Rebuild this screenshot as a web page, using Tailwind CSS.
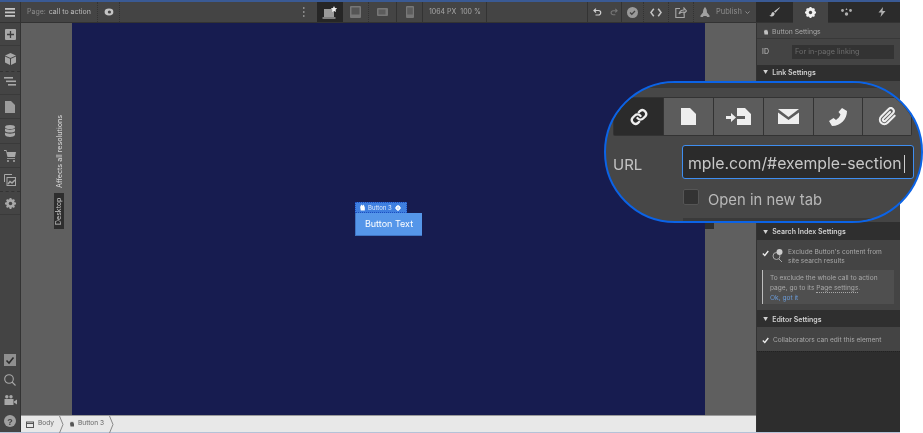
<!DOCTYPE html>
<html lang="en">
<head>
<meta charset="UTF-8">
<title>Button Settings</title>
<script src="https://cdn.jsdelivr.net/npm/@tailwindcss/browser@4"></script>
</head>
<body class="bg-white">
<div class="relative w-[923px] h-[433px] overflow-hidden font-['Inter',sans-serif] bg-white blur-[0.3px]">
  <div class="h-[2px] w-[900px] bg-[#3a5a94]"></div>
  <div class="flex flex-col w-[900px] h-[430px]">
    <!-- top bar -->
    <header class="flex h-[21px] bg-[#444444] border-b border-[#333333] text-[7px] text-[#bdbdbd]">
      <div class="w-[21px] flex items-center justify-center border-r border-[#333333]">
        <svg class="w-[10px] h-[9px]" viewBox="0 0 10 9" fill="#c4c4c4"><rect width="10" height="1.8"/><rect y="3.5" width="10" height="1.8"/><rect y="7" width="10" height="1.8"/></svg>
      </div>
      <div class="w-[77px] flex items-center pl-[6px] border-r border-dotted border-[#333333]"><span class="text-[#8c8c8c] mr-[3px]">Page:</span><span>call to action</span></div>
      <div class="w-[22px] flex items-center justify-center border-r border-dotted border-[#333333]">
        <svg class="w-[10px] h-[8px]" viewBox="0 0 10 8"><ellipse cx="5" cy="4" rx="4.4" ry="3.4" fill="#c4c4c4"/><circle cx="5.4" cy="4" r="1.6" fill="#444"/></svg>
      </div>
      <div class="flex-1 flex items-center justify-end pr-[12px]">
        <svg class="w-[3px] h-[10px]" viewBox="0 0 3 10" fill="#8a8a8a"><rect x="1" width="1.5" height="2"/><rect x="1" y="4" width="1.5" height="2"/><rect x="1" y="8" width="1.5" height="2"/></svg>
      </div>
      <div class="w-[26px] bg-[#262626] flex items-center justify-center">
        <svg class="w-[16px] h-[13px]" viewBox="0 0 16 13"><rect x="2" y="3" width="10" height="8" fill="#9a9a9a"/><path d="M0.5 11.5h13v1h-13z" fill="#d8d8d8"/><path d="M12 0l1 2 2.2.3-1.6 1.5.4 2.2-2-1-2 1 .4-2.2L8.800 2.300 11 2z" fill="#eeeeee"/></svg>
      </div>
      <div class="w-[26px] flex items-center justify-center border-r border-dotted border-[#333333]">
        <svg class="w-[11px] h-[12px]" viewBox="0 0 11 12"><rect width="11" height="12" rx="1" fill="#777"/><rect x="1.500" y="1.500" width="8" height="7" fill="#555"/></svg>
      </div>
      <div class="w-[28px] flex items-center justify-center border-r border-[#333333]">
        <svg class="w-[11px] h-[8px]" viewBox="0 0 11 8"><rect width="11" height="8" rx="1" fill="#777"/><rect x="1.500" y="1.500" width="7" height="5" fill="#5c5c5c"/></svg>
      </div>
      <div class="w-[26px] flex items-center justify-center border-r border-[#333333]">
        <svg class="w-[8px] h-[12px]" viewBox="0 0 8 12"><rect width="8" height="12" rx="1" fill="#777"/><rect x="1.200" y="1.500" width="5.600" height="7" fill="#5c5c5c"/></svg>
      </div>
      <div class="w-[64px] flex items-center pl-[6px] text-[#a8a8a8] whitespace-pre border-r border-[#333333]">1064 PX  100 %</div>
      <div class="w-[101px] border-r border-[#333333]"></div>
      <div class="w-[19px] flex items-center justify-center">
        <svg class="w-[9px] h-[8px]" viewBox="0 0 9 8" fill="none" stroke="#d0d0d0" stroke-width="1.200"><path d="M3 .6 1 2.500l2 2M1 2.500h4.500a2.200 2.200 0 0 1 0 4.500H2.500"/></svg>
      </div>
      <div class="w-[15px] flex items-center justify-center border-r border-[#333333]">
        <svg class="w-[8px] h-[8px]" viewBox="0 0 9 8" fill="none" stroke="#777" stroke-width="1.200"><path d="M6 .6 8 2.500l-2 2M8 2.500H3.500a2.200 2.200 0 0 0 0 4.500H6"/></svg>
      </div>
      <div class="w-[22px] flex items-center justify-center border-r border-dotted border-[#333333]">
        <svg class="w-[11px] h-[11px]" viewBox="0 0 11 11"><circle cx="5.500" cy="5.500" r="5.500" fill="#9a9a9a"/><path d="M3 5.500l1.800 1.800L8 4" fill="none" stroke="#444" stroke-width="1.300"/></svg>
      </div>
      <div class="w-[25px] flex items-center justify-center border-r border-dotted border-[#333333]">
        <svg class="w-[12px] h-[9px]" viewBox="0 0 12 9" fill="none" stroke="#c4c4c4" stroke-width="1.500"><path d="M3.800 .8.900 4.500l2.900 3.700M8.200 .8l2.900 3.700-2.900 3.700"/></svg>
      </div>
      <div class="w-[25px] flex items-center justify-center border-r border-dotted border-[#333333]">
        <svg class="w-[12px] h-[11px]" viewBox="0 0 12 11" fill="none" stroke="#a8a8a8" stroke-width="1.100"><path d="M5 1.500H.8v9h8.400V7M4 7c.5-2.500 2-4 5-4V1l2.500 3L9 6.500V5C7 5 5 5.500 4 7z"/></svg>
      </div>
      <div class="w-[62px] flex items-center pl-[6px] text-[#8c8c8c]">
        <svg class="w-[10px] h-[11px] mr-[6px]" viewBox="0 0 10 11" fill="#a0a0a0"><path d="M5 0c1.500 1.500 2 3.500 2 5.500l2.500 3V10H7L6.500 9h-3L3 10H.5V8.500L3 5.500C3 3.500 3.500 1.500 5 0z"/></svg>
        <span class="text-[7.500px]">Publish</span>
        <svg class="w-[5px] h-[3px] ml-[3px]" viewBox="0 0 5 3" fill="none" stroke="#8c8c8c"><path d="M.5.500l2 2 2-2"/></svg>
      </div>
      <!-- panel tabs -->
      <div class="w-[37px] bg-[#2b2b2b] flex items-center justify-center">
        <svg class="w-[11px] h-[10px]" viewBox="0 0 11 10" fill="#c8c8c8"><path d="M10.500.3 5 4.500l1.300 1.300L10.800.7zM4.300 5C2.800 5 2.500 6.200 2.300 7.300 2.100 8.200 1.200 8.600.3 8.800c2 1.200 5 1 5.400-2.200z"/></svg>
      </div>
      <div class="w-[35px] bg-[#444444] flex items-center justify-center h-[21px]">
        <svg class="w-[11px] h-[11px]" viewBox="0 0 20 20"><circle cx="10" cy="10" r="6.500" fill="none" stroke="#f0f0f0" stroke-width="4"/><path d="M10 0v20M0 10h20M3 3l14 14M17 3 3 17" stroke="#f0f0f0" stroke-width="3.500"/><circle cx="10" cy="10" r="3" fill="#444444"/></svg>
      </div>
      <div class="w-[36px] bg-[#2b2b2b] flex items-center justify-center">
        <svg class="w-[11px] h-[8px]" viewBox="0 0 11 8" fill="#b0b0b0"><circle cx="1.500" cy="2.500" r="1.400"/><circle cx="5.500" cy="6" r="1.700"/><circle cx="9.500" cy="2.500" r="1.400"/><path d="M5.500 0l1 2h-2z"/></svg>
      </div>
      <div class="w-[36px] bg-[#2b2b2b] flex items-center justify-center">
        <svg class="w-[8px] h-[10px]" viewBox="0 0 8 10" fill="#b0b0b0"><path d="M5 0 .5 5.500H3.500L2.500 10 7.500 4H4.500z"/></svg>
      </div>
    </header>
    <div class="flex flex-1 min-h-0">
      <!-- left rail -->
      <nav class="w-[21px] bg-[#444444] border-r border-[#333333] flex flex-col">
        <div class="h-[23px] flex items-center justify-center border-b border-[#3a3a3a]">
          <svg class="w-[11px] h-[11px]" viewBox="0 0 11 11"><rect width="11" height="11" rx="1" fill="#a8a8a8"/><path d="M5.500 2v7M2 5.500h7" stroke="#3c3c3c" stroke-width="1.300"/></svg>
        </div>
        <div class="h-[26px] flex items-center justify-center border-b border-dashed border-[#333333]">
          <svg class="w-[11px] h-[12px]" viewBox="0 0 11 12" fill="#a8a8a8"><path d="M5.500 0 11 2.500 5.500 5 0 2.500zM0 3.500l5 2.300V12L0 9.500zM11 3.500 6 5.800V12l5-2.500z"/></svg>
        </div>
        <div class="h-[23px] flex items-center justify-center border-b border-[#3a3a3a]">
          <svg class="w-[12px] h-[9px] mb-[3px]" viewBox="0 0 12 9" fill="#a8a8a8"><rect width="9" height="1.600"/><rect x="2" y="3.500" width="10" height="1.600"/><rect x="4" y="7" width="8" height="1.600"/></svg>
        </div>
        <div class="h-[24px] flex items-center justify-center border-b border-[#3a3a3a]">
          <svg class="w-[10px] h-[12px]" viewBox="0 0 10 12" fill="#9c9c9c"><path d="M0 0h6l4 4v8H0z"/></svg>
        </div>
        <div class="h-[25px] flex items-center justify-center border-b border-[#3a3a3a]">
          <svg class="w-[10px] h-[12px]" viewBox="0 0 10 12" fill="#a8a8a8"><ellipse cx="5" cy="2" rx="5" ry="2"/><path d="M0 3.500c1 1.500 9 1.500 10 0V6c-1 2-9 2-10 0zM0 7.500c1 1.500 9 1.500 10 0V10c-1 2.600-9 2.600-10 0z"/></svg>
        </div>
        <div class="h-[24px] flex items-center justify-center border-b border-[#3a3a3a]">
          <svg class="w-[12px] h-[12px]" viewBox="0 0 12 12" fill="#a8a8a8"><path d="M0 0h2.500l.5 2h9l-1 5H3.500L2 1H0z"/><path d="M3 8h8v.8H3z"/><circle cx="4" cy="11" r="1"/><circle cx="10" cy="11" r="1"/></svg>
        </div>
        <div class="h-[24px] flex items-center justify-center border-b border-dashed border-[#333333]">
          <svg class="w-[12px] h-[12px]" viewBox="0 0 12 12" fill="none" stroke="#a8a8a8"><path d="M.5 8V.5H8"/><rect x="3" y="3.500" width="8.500" height="8" fill="#444"/><path d="M4 10l2-2.500 2 1.500 3-3" stroke-width="1.500"/></svg>
        </div>
        <div class="h-[23px] flex items-center justify-center border-b border-[#3a3a3a]">
          <svg class="w-[11px] h-[11px]" viewBox="0 0 20 20"><circle cx="10" cy="10" r="6" fill="none" stroke="#a8a8a8" stroke-width="4"/><path d="M10 0v20M0 10h20M3 3l14 14M17 3 3 17" stroke="#a8a8a8" stroke-width="3.500"/><circle cx="10" cy="10" r="3.200" fill="#444"/></svg>
        </div>
        <div class="mt-auto flex flex-col items-center">
          <div class="h-[20px] flex items-center justify-center">
            <svg class="w-[12px] h-[12px]" viewBox="0 0 12 12"><rect width="12" height="12" fill="#8f8f8f"/><path d="M2.500 6.500 5 9l4.500-5.500" fill="none" stroke="#2c2c2c" stroke-width="1.600"/></svg>
          </div>
          <div class="h-[20px] flex items-center justify-center">
            <svg class="w-[12px] h-[12px]" viewBox="0 0 12 12" fill="none" stroke="#a8a8a8" stroke-width="1.100"><circle cx="5" cy="5" r="4.300"/><path d="M8 8l3.500 3.500"/></svg>
          </div>
          <div class="h-[20px] flex items-center justify-center">
            <svg class="w-[13px] h-[10px]" viewBox="0 0 13 10" fill="#a8a8a8"><circle cx="2.800" cy="1.800" r="1.700"/><circle cx="7" cy="1.800" r="1.700"/><rect x=".5" y="4" width="9" height="6"/><path d="M10 6.500 13 4.500v5l-3-2z"/></svg>
          </div>
          <div class="h-[22px] flex items-center justify-center">
            <svg class="w-[12px] h-[12px]" viewBox="0 0 12 12"><circle cx="6" cy="6" r="6" fill="#a0a0a0"/><text x="6" y="9.500" font-size="9" font-weight="700" text-anchor="middle" fill="#444" font-family="Liberation Sans">?</text></svg>
          </div>
        </div>
      </nav>
      <!-- canvas -->
      <main class="flex-1 flex flex-col min-w-0">
        <div class="flex-1 flex bg-[#5f5f5f] min-h-0">
          <div class="w-[51px] relative">
            <span class="absolute left-[34px] top-[92px] text-[7.2px] text-[#d8d8d8] [writing-mode:vertical-rl] rotate-180 whitespace-nowrap">Affects all resolutions</span>
            <span class="absolute left-[33px] top-[170px] w-[10px] h-[36px] bg-[#2e2e2e] text-[7px] text-[#c8c8c8] flex items-center justify-center [writing-mode:vertical-rl] rotate-180">Desktop</span>
          </div>
          <div class="w-[633px] bg-[#171c50] relative">
            <div class="absolute left-[283px] top-[179px]">
              <div class="h-[11px] w-[52px] bg-[#3f7fe0] border border-dotted border-[#1d4fc0] flex items-center pl-[3px] text-[6px] text-[#dfe9fa]">
                <svg class="w-[7px] h-[7px] mr-[2px]" viewBox="0 0 6 6" fill="#ffffff"><path d="M1 2.500 2 .5l1 1 1-1 1 2.500V5.500H1.500z"/></svg>
                <span>Button 3</span>
                <svg class="w-[6px] h-[6px] ml-[3px]" viewBox="0 0 20 20"><circle cx="10" cy="10" r="6" fill="none" stroke="#fff" stroke-width="4"/><path d="M10 0v20M0 10h20" stroke="#fff" stroke-width="3.500"/></svg>
              </div>
              <div class="w-[67px] h-[23px] bg-[#5596e9] border-b border-l border-[#3f74c4] text-white text-[9px] flex items-center justify-center">Button Text</div>
            </div>
          </div>
        </div>
        <div class="h-[17px] bg-[#e8e8e8] border-t border-[#9a9a9a] flex items-center text-[6.6px] text-[#666666]">
          <svg class="ml-[5px] w-[8px] h-[7px]" viewBox="0 0 8 7" fill="none" stroke="#555"><rect x=".5" y="1" width="7" height="5.500"/><path d="M.5 2.500h7"/></svg>
          <span class="ml-[4px]">Body</span>
          <svg class="ml-[5px] w-[5px] h-[17px]" viewBox="0 0 5 17" fill="none" stroke="#888"><path d="M.5 0 4 8.500 .5 17"/></svg>
          <svg class="ml-[5px] w-[6px] h-[6px]" viewBox="0 0 6 6" fill="#555"><path d="M1 2.500 2 .5l1 1 1-1 1 2.500V5.500H1.500z"/></svg>
          <span class="ml-[3px]">Button 3</span>
          <svg class="ml-[5px] w-[5px] h-[17px]" viewBox="0 0 5 17" fill="none" stroke="#888"><path d="M.5 0 4 8.500 .5 17"/></svg>
        </div>
      </main>
      <!-- right panel -->
      <aside class="w-[144px] bg-[#444444] border-l border-[#333333] text-[6.6px] text-[#c0c0c0] flex flex-col">
        <div class="h-[16px] pt-[3px] flex items-center pl-[6px] border-b border-[#383838] text-[#a8a8a8] text-[6.8px]">
          <svg class="w-[6px] h-[6px] mr-[3px]" viewBox="0 0 6 6" fill="#c0c0c0"><path d="M1 2.500 2 .5l1 1 1-1 1 2.500V5.500H1.500z"/></svg>
          Button Settings
        </div>
        <div class="h-[26px] flex items-center pl-[5px] text-[7px]">
          <span class="w-[30px]">ID</span>
          <div class="w-[102px] h-[14px] bg-[#333333] flex items-center pl-[3px] text-[#6e6e6e] text-[7.3px]">For in-page linking</div>
        </div>
        <div class="h-[16px] bg-[#2f2f2f] flex items-center pl-[6px] font-semibold text-[#d0d0d0] text-[7px]"><span class="text-[5px] mr-[4px]">▼</span>Link Settings</div>
        <div class="h-[141px]"></div>
        <div class="h-[18px] pt-[3px] bg-[#2f2f2f] flex items-center pl-[6px] font-semibold text-[#d0d0d0] text-[7px]"><span class="text-[5px] mr-[4px]">▼</span>Search Index Settings</div>
        <div class="flex pl-[5px] pt-[8px]">
          <svg class="w-[7px] h-[7px] mt-[2px] shrink-0" viewBox="0 0 7 7" fill="none" stroke="#eee" stroke-width="1.300"><path d="M.8 3.500 2.800 5.500 6.300 1"/></svg>
          <svg class="w-[11px] h-[13px] ml-[3px] mt-[1px] shrink-0" viewBox="0 0 11 13" fill="none" stroke="#aaa"><circle cx="4.500" cy="7" r="3.500"/><path d="M7 10l3 3"/><circle cx="7.500" cy="3" r="3" fill="#ccc" stroke="none"/></svg>
          <p class="ml-[5px] leading-[9px] text-[#a8a8a8] w-[100px]">Exclude Button's content from site search results</p>
        </div>
        <div class="ml-[5px] mt-[4px] w-[132px] h-[34px] bg-[#4f4f4f] border-l border-[#bdbdbd] px-[7px] pt-[3px] leading-[10px] text-[#a8a8a8]">
          <p>To exclude the whole call to action page, go to its <span class="border-b border-dotted border-[#a8a8a8]">Page settings</span>.</p>
          <p class="text-[#6a9bd8]">Ok, got it</p>
        </div>
        <div class="mt-[6px] h-[17px] pt-[3px] bg-[#2f2f2f] flex items-center pl-[6px] font-semibold text-[#d0d0d0] text-[7px]"><span class="text-[5px] mr-[4px]">▼</span>Editor Settings</div>
        <div class="h-[24px] pt-[3px] flex items-center pl-[5px] text-[#a8a8a8]">
          <svg class="w-[7px] h-[7px] mr-[4px]" viewBox="0 0 7 7" fill="none" stroke="#eee" stroke-width="1.300"><path d="M.8 3.500 2.800 5.500 6.300 1"/></svg>
          Collaborators can edit this element
        </div>
        <div class="flex-1 bg-[#2d2d2d] border-t border-dotted border-[#222222]"></div>
      </aside>
    </div>
  </div>
  <div class="h-[1px] w-[900px] bg-[#b4c2d8]"></div>
  <!-- small dark tag peeking out from under the callout -->
  <div class="absolute left-[705px] top-[218px] w-[9px] h-[11px] bg-[#2e2e2e]"></div>
  <!-- magnified link settings callout -->
  <div class="absolute left-[604px] top-[81px] w-[319px] h-[142px] rounded-[71px] border-2 border-[#0b63e6] bg-[#474747] overflow-hidden">
    <div class="absolute left-0 top-0 w-full h-[5px] bg-[#383838]"></div>
    <div class="absolute left-[7px] top-[14px] flex h-[39px] w-[299px] gap-[1px] bg-[#333333] rounded-[2px] p-[1px]">
      <div class="w-[49px] bg-[#2b2b2b] flex items-center justify-center">
        <svg class="w-[18px] h-[18px]" viewBox="0 0 24 24" fill="none" stroke="#eeeeee" stroke-width="3.200" stroke-linecap="round"><path d="M10 13.500a5 5 0 0 0 7.500.5l3-3a5 5 0 0 0-7-7l-1.700 1.700"/><path d="M14 10.500a5 5 0 0 0-7.500-.5l-3 3a5 5 0 0 0 7 7l1.700-1.700"/></svg>
      </div>
      <div class="w-[49px] bg-[#5c5c5c] flex items-center justify-center">
        <svg class="w-[15px] h-[17px]" viewBox="0 0 15 17" fill="#eeeeee"><path d="M0 0h9l6 6v11H0z"/></svg>
      </div>
      <div class="w-[49px] bg-[#5c5c5c] flex items-center justify-center">
        <svg class="w-[25px] h-[17px]" viewBox="0 0 25 17" fill="#eeeeee"><path d="M11 0h8l6 6v11H11v-6h8V8h-8z"/><path d="M0 8h5V5l5 4.500L5 14v-3H0z"/></svg>
      </div>
      <div class="w-[49px] bg-[#5c5c5c] flex items-center justify-center">
        <svg class="w-[21px] h-[15px]" viewBox="0 0 21 15" fill="#eeeeee"><path d="M0 0h21L10.500 8zM0 3.500 10.500 11 21 3.500V15H0z"/></svg>
      </div>
      <div class="w-[48px] bg-[#5c5c5c] flex items-center justify-center">
        <svg class="w-[18px] h-[18px]" viewBox="0 0 18 18" fill="#eeeeee"><path d="M13 0l5 3c0 8-6 15-15 15L0 13l4.500-3L7 12c2-1.500 3.500-3 4.500-5.500L9.500 4z"/></svg>
      </div>
      <div class="flex-1 bg-[#5c5c5c] flex items-center justify-center">
        <svg class="w-[19px] h-[19px]" viewBox="0 0 24 24" fill="none" stroke="#eeeeee" stroke-width="2.600" stroke-linecap="round"><path d="M21 11l-9 9a5.500 5.500 0 0 1-8-8l9.500-9.500a3.700 3.700 0 0 1 5.300 5.300l-9.500 9.500a1.800 1.800 0 0 1-2.600-2.600l8.500-8.500"/></svg>
      </div>
    </div>
    <span class="absolute left-[7px] top-[71px] text-[15px] text-[#c4c4c4]">URL</span>
    <div class="absolute left-[76px] top-[62px] w-[232px] h-[34px] bg-[#2b2b2b] border border-[#3f8ef0] rounded-[3px] flex items-center pl-[5px] pt-[3px] text-[15.8px] text-[#c8c8c8] whitespace-nowrap overflow-hidden">mple.com/#exemple-section<span class="ml-[2px] w-[1px] h-[18px] bg-[#cccccc]"></span></div>
    <div class="absolute left-[77px] top-[106px] w-[16px] h-[16px] bg-[#333333] border border-[#555555] rounded-[2px]"></div>
    <span class="absolute left-[102px] top-[106px] text-[14.8px] text-[#b8b8b8]">Open in new tab</span>
    <div class="absolute left-[77px] top-[135px] w-[190px] h-[3px] bg-[#3a3a3a]"></div>
  </div>
</div>
</body>
</html>
